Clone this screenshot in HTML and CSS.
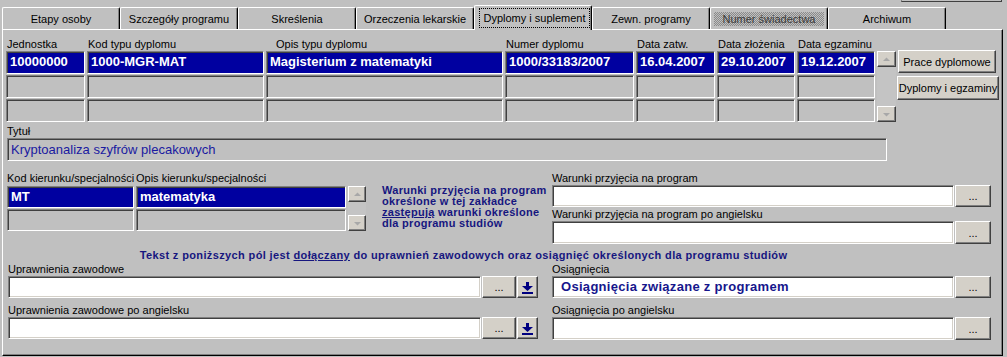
FILE: index.html
```html
<!DOCTYPE html>
<html lang="pl">
<head>
<meta charset="utf-8">
<title>Dyplomy i suplement</title>
<link rel="stylesheet" href="styles.css">
</head>
<body>
<div class="screen">
  <div class="corner-box"></div>
  <nav class="tabs">
    <div class="tab">Etapy osoby</div>
    <div class="tab">Szczegóły programu</div>
    <div class="tab">Skreślenia</div>
    <div class="tab">Orzeczenia lekarskie</div>
    <div class="tab tab-active"><span class="focus">Dyplomy i suplement</span></div>
    <div class="tab">Zewn. programy</div>
    <div class="tab"><span class="dither">Numer świadectwa</span></div>
    <div class="tab">Archiwum</div>
  </nav>
  <div class="panel">
    <section class="diplomas">
      <div class="dgrid">
        <div class="lbl">Jednostka</div>
        <div class="lbl">Kod typu dyplomu</div>
        <div class="lbl lbl-indent">Opis typu dyplomu</div>
        <div class="lbl">Numer dyplomu</div>
        <div class="lbl">Data zatw.</div>
        <div class="lbl">Data złożenia</div>
        <div class="lbl">Data egzaminu</div>
        <div class="cell sel">10000000</div>
        <div class="cell sel">1000-MGR-MAT</div>
        <div class="cell sel">Magisterium z matematyki</div>
        <div class="cell sel">1000/33183/2007</div>
        <div class="cell sel">16.04.2007</div>
        <div class="cell sel">29.10.2007</div>
        <div class="cell sel">19.12.2007</div>
        <div class="cell"></div><div class="cell"></div><div class="cell"></div><div class="cell"></div><div class="cell"></div><div class="cell"></div><div class="cell"></div>
        <div class="cell"></div><div class="cell"></div><div class="cell"></div><div class="cell"></div><div class="cell"></div><div class="cell"></div><div class="cell"></div>
      </div>
      <div class="vscroll vscroll-a">
        <div class="sbtn"><svg width="7" height="5" viewBox="0 0 7 5"><polygon points="3.5,0.5 7,4 0,4" fill="#a8a8a8"/></svg></div>
        <div class="sbtn"><svg width="7" height="5" viewBox="0 0 7 5"><polygon points="0,1 7,1 3.5,4.5" fill="#a8a8a8"/></svg></div>
      </div>
      <div class="side">
        <button class="btn btn-prace">Prace dyplomowe</button>
        <button class="btn btn-dypl">Dyplomy i egzaminy</button>
      </div>
    </section>

    <section class="title-block">
      <div class="lbl">Tytuł</div>
      <div class="title-field">Kryptoanaliza szyfrów plecakowych</div>
    </section>

    <section class="middle">
      <div class="spec">
        <div class="spec-grid">
          <div class="lbl">Kod kierunku/specjalności</div>
          <div class="lbl">Opis kierunku/specjalności</div>
          <div class="cell sel">MT</div>
          <div class="cell sel">matematyka</div>
          <div class="cell"></div>
          <div class="cell"></div>
        </div>
        <div class="vscroll vscroll-b">
          <div class="sbtn"><svg width="7" height="5" viewBox="0 0 7 5"><polygon points="3.5,0.5 7,4 0,4" fill="#a8a8a8"/></svg></div>
          <div class="sbtn"><svg width="7" height="5" viewBox="0 0 7 5"><polygon points="0,1 7,1 3.5,4.5" fill="#a8a8a8"/></svg></div>
        </div>
      </div>
      <p class="info">Warunki przyjęcia na program<br>określone w tej zakładce<br><u>zastępują</u> warunki określone<br>dla programu studiów</p>
      <div class="fields">
        <div class="lbl">Warunki przyjęcia na program</div>
        <div class="field-row">
          <div class="field field-r h22"></div>
          <button class="btn btn-dots">...</button>
        </div>
        <div class="lbl">Warunki przyjęcia na program po angielsku</div>
        <div class="field-row">
          <div class="field field-r h23"></div>
          <button class="btn btn-dots">...</button>
        </div>
      </div>
    </section>

    <p class="note">Tekst z poniższych pól jest <u>dołączany</u> do uprawnień zawodowych oraz osiągnięć określonych dla programu studiów</p>

    <section class="bottom">
      <div class="col">
        <div class="lbl">Uprawnienia zawodowe</div>
        <div class="field-row">
          <div class="field field-l h22"></div>
          <button class="btn btn-dots-l">...</button>
          <button class="btn btn-down"><svg width="19" height="20" viewBox="0 0 19 20"><rect x="8" y="5" width="3" height="5" fill="#000080"/><polygon points="4,9 15,9 9.5,14" fill="#000080"/><rect x="4" y="15" width="11" height="2" fill="#000080"/></svg></button>
        </div>
        <div class="lbl second">Uprawnienia zawodowe po angielsku</div>
        <div class="field-row">
          <div class="field field-l h22"></div>
          <button class="btn btn-dots-l">...</button>
          <button class="btn btn-down"><svg width="19" height="20" viewBox="0 0 19 20"><rect x="8" y="5" width="3" height="5" fill="#000080"/><polygon points="4,9 15,9 9.5,14" fill="#000080"/><rect x="4" y="15" width="11" height="2" fill="#000080"/></svg></button>
        </div>
      </div>
      <div class="col">
        <div class="lbl">Osiągnięcia</div>
        <div class="field-row">
          <div class="field field-r h22 achieve">Osiągnięcia związane z programem</div>
          <button class="btn btn-dots">...</button>
        </div>
        <div class="lbl second">Osiągnięcia po angielsku</div>
        <div class="field-row">
          <div class="field field-r h23"></div>
          <button class="btn btn-dots">...</button>
        </div>
      </div>
    </section>
  </div>
</div>
</body>
</html>
```

FILE: styles.css
```css
* { box-sizing: border-box; margin: 0; padding: 0; }
html, body { background: #c0c0c0; }
body {
  width: 1007px;
  height: 357px;
  overflow: hidden;
  font-family: "Liberation Sans", Arial, sans-serif;
  font-size: 11px;
  color: #000;
}
.screen { position: relative; width: 1007px; height: 357px; }

.corner-box {
  position: absolute;
  top: 0;
  left: 901px;
  width: 101px;
  height: 2px;
  border-left: 1px solid #808080;
  border-right: 1px solid #404040;
  border-bottom: 1px solid #404040;
}

/* tabs */
.tabs {
  display: flex;
  align-items: flex-end;
  height: 29px;
  padding-left: 2px;
}
.tab {
  width: 118px;
  height: 22px;
  display: flex;
  align-items: center;
  justify-content: center;
  background: #c0c0c0;
  border-top: 1px solid #fff;
  border-left: 1px solid #fff;
  border-right: 1px solid #000;
  box-shadow: inset -1px 0 #808080;
  border-radius: 2px 2px 0 0;
  white-space: nowrap;
}
.tab-active {
  height: 25px;
  margin-bottom: -1px;
  position: relative;
  z-index: 1;
  padding: 2px 1px 2px 4px;
}
.focus {
  flex: 1;
  align-self: stretch;
  display: flex;
  align-items: center;
  justify-content: center;
  border: 1px dotted #000;
}
.dither {
  padding: 1px 9px;
  color: #3a3a3a;
  background: repeating-conic-gradient(#8a8a8a 0 25%, #c0c0c0 0 50%) 0 0 / 2px 2px;
}

/* panel */
.panel {
  width: 1001px;
  height: 327px;
  margin-left: 2px;
  border-top: 1px solid #fff;
  border-left: 1px solid #fff;
  border-right: 1px solid #000;
  border-bottom: 1px solid #000;
  box-shadow: inset -1px -1px #808080;
}

.lbl { font-size: 11px; line-height: 12px; white-space: nowrap; }

.cell {
  background: #c0c0c0;
  border: 1px solid;
  border-color: #808080 #fff #fff #808080;
  box-shadow: inset 1px 1px #404040;
  font-size: 13px;
  font-weight: bold;
  padding: 0 0 2px 3px;
  display: flex;
  align-items: center;
  white-space: nowrap;
  overflow: hidden;
}
.sel { background: #0000a0; color: #fff; }

/* diplomas table */
.diplomas {
  display: flex;
  align-items: flex-start;
  gap: 2px;
  margin: 8px 0 0 3px;
}
.dgrid {
  display: grid;
  grid-template-columns: 79px 177px 237px 129px 79px 78px 78px;
  grid-template-rows: 12px repeat(3, 23px);
  column-gap: 2px;
  row-gap: 1px;
}
.dgrid .lbl { padding-left: 1px; }
.dgrid .lbl-indent { padding-left: 10px; }

.vscroll {
  width: 19px;
  display: flex;
  flex-direction: column;
  justify-content: space-between;
  background: #c4c4c4;
}
.vscroll-a { height: 71px; margin-top: 13px; }
.vscroll-b { width: 18px; height: 45px; margin-top: 15px; }
.sbtn {
  height: 16px;
  background: #d4d0c8;
  border: 1px solid;
  border-color: #fff #404040 #404040 #fff;
  box-shadow: inset -1px -1px #808080;
  display: flex;
  align-items: center;
  justify-content: center;
}

.btn {
  font-family: inherit;
  font-size: 11px;
  color: #000;
  background: #d4d0c8;
  border: 1px solid;
  border-color: #fff #404040 #404040 #fff;
  box-shadow: inset -1px -1px #808080;
  display: flex;
  align-items: center;
  justify-content: center;
  white-space: nowrap;
  padding: 0;
}
.side {
  display: flex;
  flex-direction: column;
  align-items: flex-start;
  gap: 3px;
  margin-top: 12px;
}
.btn-prace { width: 98px; height: 23px; }
.btn-dypl { width: 102px; height: 24px; margin-left: -1px; }

/* title */
.title-block { margin: 2px 0 0 4px; }
.title-block .lbl { line-height: 14px; }
.title-field {
  width: 880px;
  height: 23px;
  background: #c0c0c0;
  border: 1px solid;
  border-color: #808080 #fff #fff #808080;
  box-shadow: inset 1px 1px #404040;
  font-size: 13px;
  color: #1a1aa0;
  padding: 0 0 1px 3px;
  display: flex;
  align-items: center;
  white-space: nowrap;
}

/* middle */
.middle {
  display: grid;
  grid-template-columns: 375px 170px 439px;
  align-items: start;
  margin: 10px 0 0 4px;
}
.spec { display: flex; gap: 2px; align-items: flex-start; }
.spec-grid {
  display: grid;
  grid-template-columns: 127px 210px;
  grid-template-rows: 14px 22px 22px;
  column-gap: 2px;
  row-gap: 1px;
}
.spec .lbl { line-height: 14px; }
.info {
  margin-top: 14px;
  font-size: 11px;
  font-weight: bold;
  line-height: 11px;
  letter-spacing: 0.28px;
  color: #16167f;
  white-space: nowrap;
}
.fields .lbl { line-height: 14px; }

.field-row { display: flex; gap: 1px; }
.field {
  background: #fff;
  border: 1px solid;
  border-color: #808080 #fff #fff #808080;
  box-shadow: inset 1px 1px #404040, inset -1px -1px #d4d0c8;
}
.field-r { width: 402px; }
.field-l { width: 473px; }
.h22 { height: 22px; }
.h23 { height: 23px; }
.btn-dots { width: 36px; }
.btn-dots-l { width: 34px; height: 22px; }
.btn-down { width: 21px; height: 22px; }

.note {
  margin: 5px 0 0 5px;
  width: 911px;
  text-align: center;
  font-size: 11px;
  font-weight: bold;
  line-height: 13px;
  letter-spacing: 0.37px;
  color: #16167f;
  white-space: nowrap;
}

/* bottom */
.bottom {
  display: grid;
  grid-template-columns: 530px 439px;
  column-gap: 14px;
  margin-left: 5px;
}
.bottom .lbl { line-height: 14px; }
.bottom .lbl.second { margin-top: 5px; }
.achieve {
  display: flex;
  align-items: center;
  padding: 0 0 1px 8px;
  font-size: 13px;
  font-weight: bold;
  letter-spacing: 0.3px;
  color: #16168c;
  white-space: nowrap;
}
```
